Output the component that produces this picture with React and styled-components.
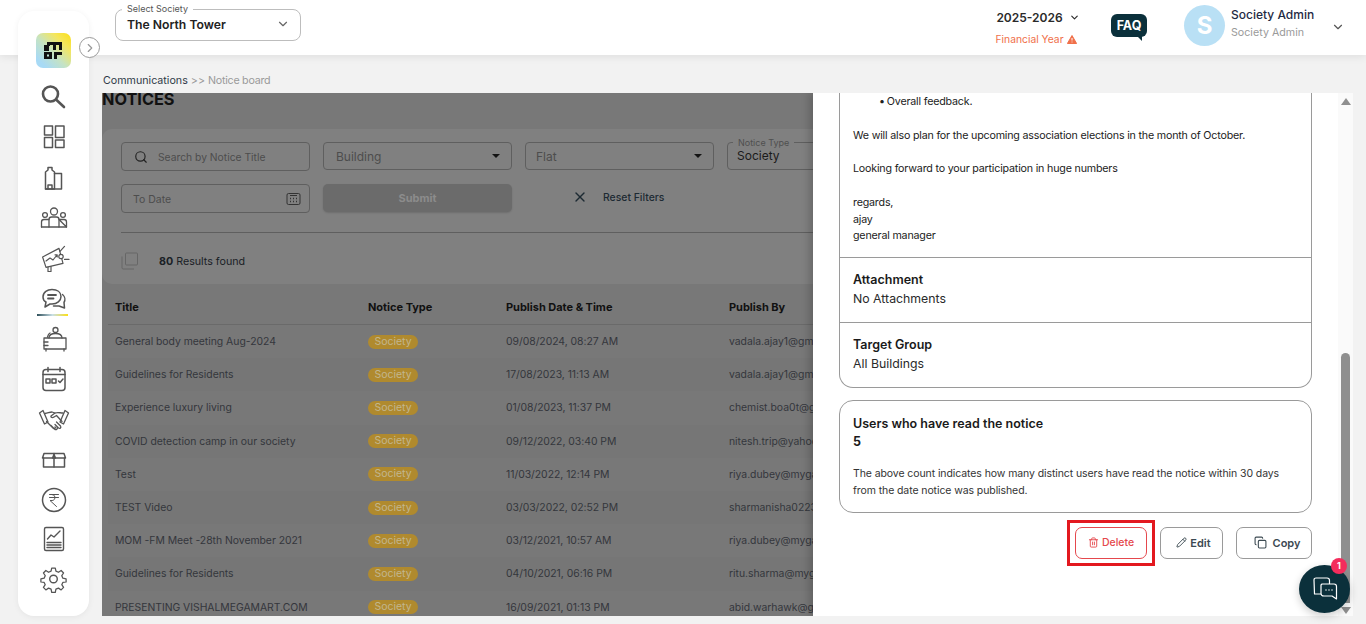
import React from "react";
import styled, { createGlobalStyle } from "styled-components";
import { Search, X, Pencil, Trash2, Copy, ChevronDown, ChevronRight } from "lucide-react";

const Global = createGlobalStyle`
  html, body { margin: 0; padding: 0; height: 100%; overflow: hidden; }
  body { font-family: Inter, "Liberation Sans", sans-serif; background: #f2f2f2; }
  #root { height: 100%; }
  * { box-sizing: border-box; }
`;

const Page = styled.div`
  position: relative;
  height: 624px;
  display: flex;
  flex-direction: column;
  overflow: hidden;
  background: #f2f2f2;
`;

/* ---------- header ---------- */
const Header = styled.header`
  height: 55px;
  flex: none;
  background: #fff;
  box-shadow: 0 2px 8px rgba(0, 0, 0, 0.08);
  display: flex;
  align-items: flex-start;
  padding-left: 115px;
  position: relative;
`;
const SocietySelect = styled.div`
  position: relative;
  margin-top: 9px;
  width: 186px;
  height: 32px;
  border: 1px solid #bdbdbd;
  border-radius: 8px;
  display: flex;
  align-items: center;
  justify-content: space-between;
  padding: 0 10px 2px 11px;
  color: #666;
`;
const FloatLabel = styled.span`
  position: absolute;
  top: -7px;
  left: 6px;
  padding: 0 5px;
  background: #fff;
  font-size: 9px;
  line-height: 11px;
  color: #555;
`;
const SocietyName = styled.span`
  font-size: 12.2px;
  font-weight: 600;
  color: #222;
`;
const HeaderRight = styled.div`
  margin-left: auto;
  display: flex;
  align-items: flex-start;
  height: 100%;
`;
const YearBlock = styled.div`
  width: 86px;
  margin-right: 30px;
  padding-top: 10px;
  display: flex;
  flex-direction: column;
  align-items: center;
`;
const YearRow = styled.div`
  display: flex;
  align-items: center;
  gap: 6px;
  font-size: 12px;
  font-weight: 600;
  line-height: 15px;
  color: #2a2a2a;
`;
const FinYear = styled.div`
  margin: 8px 4px 0 0;
  display: flex;
  align-items: center;
  gap: 3px;
  font-size: 10.3px;
  line-height: 13px;
  color: #f0704a;
  white-space: nowrap;
`;
const Faq = styled.div`
  position: relative;
  margin-top: 14px;
  margin-right: 37px;
  width: 36px;
  height: 23px;
  background: #0b303b;
  border-radius: 6px;
  color: #fff;
  font-size: 12.5px;
  font-weight: 700;
  line-height: 23px;
  text-align: center;
  &::after {
    content: "";
    position: absolute;
    right: 5px;
    bottom: -4px;
    border-top: 5px solid #0b303b;
    border-left: 5px solid transparent;
  }
`;
const Avatar = styled.div`
  margin-top: 5px;
  width: 41px;
  height: 41px;
  border-radius: 50%;
  background: #b9e0f5;
  color: #fff;
  font-size: 24px;
  font-weight: 700;
  display: flex;
  align-items: center;
  justify-content: center;
`;
const UserBlock = styled.div`
  margin-left: 6px;
  width: 100px;
  padding-top: 7px;
`;
const UserName = styled.div`
  font-size: 12px;
  line-height: 15px;
  font-weight: 500;
  color: #1f2a44;
`;
const UserRole = styled.div`
  margin-top: 4px;
  font-size: 10.7px;
  line-height: 13px;
  color: #9a9a9a;
`;
const UserChevron = styled.div`
  margin-top: 18px;
  width: 35px;
  color: #555;
`;

/* ---------- sidebar ---------- */
const Sidebar = styled.nav`
  position: absolute;
  left: 18px;
  top: 11px;
  width: 71px;
  height: 605px;
  background: #fff;
  border-radius: 16px;
  box-shadow: 0 1px 6px rgba(0, 0, 0, 0.06);
  display: flex;
  flex-direction: column;
  align-items: center;
  padding-top: 22px;
  z-index: 5;
`;
const Logo = styled.div`
  width: 35px;
  height: 35px;
  border-radius: 7px;
  margin-bottom: 8px;
  background: linear-gradient(225deg, #fbdf16 0%, #f5e65c 25%, #c5e3c4 55%, #a8daf5 85%);
  display: flex;
  align-items: center;
  justify-content: center;
`;
const NavItem = styled.div`
  position: relative;
  flex: none;
  height: 40.4px;
  width: 100%;
  display: flex;
  align-items: center;
  justify-content: center;
  &::after {
    content: "";
    display: ${(p) => (p.$active ? "block" : "none")};
    position: absolute;
    left: 19px;
    bottom: 2.5px;
    width: 31px;
    height: 2px;
    background: linear-gradient(90deg, #2f4f5a, #c9dfe6 50%, #fbdf16);
  }
`;
const Toggle = styled.div`
  position: absolute;
  left: 79px;
  top: 37px;
  width: 21px;
  height: 21px;
  border-radius: 50%;
  border: 1px solid #9a9a9a;
  background: #fff;
  color: #999;
  display: flex;
  align-items: center;
  justify-content: center;
  z-index: 6;
`;
const Ico = ({ children, w = 1.4 }) => (
  <svg width="32" height="32" viewBox="0 0 32 32" fill="none" stroke="#555" strokeWidth={w} strokeLinecap="round" strokeLinejoin="round">
    {children}
  </svg>
);
const icons = [
  <Ico w={2.6} key="s"><circle cx="12.5" cy="14" r="7.5" /><path d="M18 19.5 L26 27" /></Ico>,
  <Ico w={1.5} key="d"><rect x="6.5" y="5" width="8" height="9" /><rect x="6.5" y="16.5" width="8" height="10" /><rect x="17.5" y="5" width="8.5" height="11.5" /><rect x="17.5" y="19" width="8.5" height="7.5" /></Ico>,
  <Ico w={1.5} key="b"><path d="M7.5 28V11L10 9V6.5H14V9L16.5 11V28Z" /><path d="M16.5 12.5H23.5V28H7.5" /><path d="M10 28V24H14V28" /></Ico>,
  <Ico w={1.3} key="p"><circle cx="16" cy="10.5" r="3.5" /><circle cx="7" cy="14" r="2.4" /><circle cx="25" cy="14" r="2.4" /><path d="M11 26V18.5Q11 16 13.5 16H18.5Q21 16 21 18.5V26" /><path d="M3.5 26V21Q3.5 18.5 6 18.5H11M21 18.5H26Q28.5 18.5 28.5 21V26Z" /><path d="M3.5 26H28.5" /></Ico>,
  <Ico w={1.2} key="m"><path d="M4.6 15L21 6.4L25 21.4L8 25.4Z" /><path d="M10 25V29.5H13V24.5" /><path d="M8 19L12 16L15 18L19 13M17 12.8H19.2V15" /><circle cx="23" cy="14.5" r="2.2" fill="#fff" /><path d="M22 9.4L26.5 4.4M26.5 17.4H31" /></Ico>,
  <Ico w={1.5} key="c"><g transform="translate(0 1.5)"><path d="M5 13.5C5 8.5 9.5 6 14 6C19 6 23 8.5 23 13C23 17.5 19 20.5 14 20.5H12L7 23.5L8 18.5C6 17.5 5 15.5 5 13.5Z" /><path d="M10 11.5H18M10 15H15.5" strokeWidth="1.8" /><path d="M24.5 11C27 13 27.5 16.5 26 19L26.5 24.5L21 22.5H15.5" /></g></Ico>,
  <Ico w={1.3} key="t"><circle cx="17.5" cy="7" r="2.5" /><path d="M11 15C11 12 14 10.5 17.5 10.5C21 10.5 24 12 24 15" /><path d="M6 15H28V26H6Z" /><path d="M8 26V28M26 26V28M6 19H10M6 22.5H10" /><path d="M9.5 14C10 12 11 10.5 12 10" /></Ico>,
  <Ico w={1.5} key="k"><rect x="5" y="6.5" width="22" height="21" rx="3" /><path d="M5 11.5H27M10 4.5V8.5M22 4.5V8.5" /><rect x="8" y="16" width="4" height="4" /><rect x="14" y="16" width="4" height="4" /><path d="M20.5 18L22 19.5L25 16" /></Ico>,
  <Ico w={1.3} key="h"><path d="M1.5 10L5 7.5L10 19L6.5 21Z" /><path d="M30.5 10L27 7.5L22 19L25.5 21Z" /><path d="M7 10.5C10 10 12 9 14 9L17 10L13 13C12.5 14.5 14.5 15 16 14L18.5 12.5L24 18.5" /><path d="M25 10C22 10 20 9 17 10" /><path d="M8.5 18.5L15 25C16.5 26.5 18 25 17 24M13 22.5L16.5 26C18 27.5 20 26 19 24.5M17 21.5L20.5 25C22 26 23.5 24.5 22.5 23L18.5 19" /></Ico>,
  <Ico w={1.5} key="x"><path d="M6 9.5H26L27.5 14H4.5Z" /><path d="M5.5 14V23H26.5V14" /><path d="M16 9.5V23" /><path d="M14.5 14L16 10.5L17.5 14Z" fill="#555" /></Ico>,
  <Ico w={1.5} key="r"><circle cx="16" cy="16" r="11.5" /><path d="M11.5 10.5H20.5M11.5 13.5H20.5M14 10.5C18 10.5 18 16.5 14 16.5H12L18.5 22.5" strokeWidth="1" /></Ico>,
  <Ico w={1.4} key="g"><rect x="6.5" y="3.5" width="19" height="23" rx="1.5" /><path d="M9.5 15L13 11L16 13L22 7" /><path d="M9 18.5H23M9 21H23M9 23.5H23" /></Ico>,
  <Ico w={1.4} key="w"><circle cx="15.5" cy="14" r="3.8" /><path d="M14 2.5H18L18.7 6L21.5 7.2L24.5 5.2L27.2 8L25.2 11L26.4 13.8L30 14.5V18L26.4 18.5L25.2 21L27.2 24L24.5 26.8L21.5 24.8L18.7 26L18 29.5H14L13.3 26L10.5 24.8L7.5 26.8L4.8 24L6.8 21L5.6 18.5L2 18V14.5L5.6 13.8L6.8 11L4.8 8L7.5 5.2L10.5 7.2L13.3 6Z" transform="translate(1.1 0.8) scale(0.9)" /></Ico>,
];

/* ---------- main ---------- */
const Main = styled.main`
  flex: 1;
  min-height: 0;
  display: flex;
  flex-direction: column;
  padding: 0 13px 8px 102px;
`;
const Crumbs = styled.div`
  height: 38px;
  flex: none;
  padding: 19px 0 0 1px;
  font-size: 10.7px;
  line-height: 13px;
  color: #9a9a9a;
  & b { font-weight: 400; color: #2f3a48; }
  & i { font-style: normal; letter-spacing: -0.25px; }
`;
const Stage = styled.section`
  position: relative;
  flex: 1;
  min-height: 0;
  overflow: hidden;
  background: #787878;
`;
const Title = styled.h1`
  margin: 0;
  font-size: 16.3px;
  line-height: 12px;
  font-weight: 700;
  color: #111;
`;
const FilterCard = styled.div`
  margin-top: 24px;
  height: 155px;
  background: #808080;
  border-radius: 10px;
  padding: 13px 19px 0;
`;
const FilterGrid = styled.div`
  display: grid;
  grid-template-columns: repeat(4, 189px);
  grid-auto-rows: 29px;
  gap: 13px;
`;
const Field = styled.div`
  position: relative;
  border: 1px solid #5f5f5f;
  border-radius: 4px;
  display: flex;
  align-items: center;
  padding: 0 ${(p) => p.$pr || 11}px 0 ${(p) => p.$pl || 12}px;
  color: #4d4d4d;
  font-size: ${(p) => p.$fs || 12}px;
  height: ${(p) => p.$h || 29}px;
`;
const Placeholder = styled.span`
  flex: 1;
  margin-left: ${(p) => p.$ml || 0}px;
  margin-top: ${(p) => p.$mt || 0}px;
`;
const TypeLabel = styled.span`
  position: absolute;
  top: -6px;
  left: 5px;
  padding: 0 5px;
  background: #808080;
  font-size: 9px;
  line-height: 11px;
  color: #4f4f4f;
`;
const TypeValue = styled.span`
  color: #1b1b1b;
  font-size: 12px;
  margin: -1px 0 0 -1px;
`;
const Caret = styled.span`
  width: 0;
  height: 0;
  border-left: 4px solid transparent;
  border-right: 4px solid transparent;
  border-top: 4px solid #141414;
`;
const SubmitBtn = styled.div`
  height: 28px;
  border-radius: 5px;
  background: #6b6b6b;
  box-shadow: 0 1px 2px rgba(0, 0, 0, 0.15);
  color: #8c8c8c;
  font-size: 11px;
  font-weight: 700;
  display: flex;
  align-items: center;
  justify-content: center;
`;
const ResetBtn = styled.div`
  height: 28px;
  display: flex;
  align-items: center;
  padding: 0 0 2px 47px;
  gap: 15px;
  color: #1d2a33;
  font-size: 10.4px;
  font-weight: 500;
`;
const Divider = styled.div`
  margin-top: 19px;
  height: 1px;
  background: #5f5f5f;
`;
const Results = styled.div`
  margin-top: 18px;
  height: 20px;
  display: flex;
  align-items: center;
  gap: 20px;
  font-size: 10.7px;
  color: #1a2026;
  & b { font-weight: 700; }
`;
const Table = styled.div`
  margin: 8px 0 0 6px;
`;
const Row = styled.div`
  display: grid;
  grid-template-columns: 253px 138px 223px 1fr;
  align-items: center;
  padding-left: 7px;
  height: 33.2px;
  font-size: 10.4px;
  letter-spacing: -0.02px;
  white-space: nowrap;
  color: #34363c;
  background: ${(p) => (p.$alt ? "#767676" : "transparent")};
`;
const HeadRow = styled(Row)`
  height: 33px;
  padding-bottom: 3px;
  font-size: 11px;
  border-bottom: 1px solid #6a6a6a;
  font-weight: 700;
  color: #111;
`;
const Pill = styled.span`
  justify-self: start;
  width: 50px;
  height: 14px;
  border-radius: 7px;
  background: #b08a2e;
  color: #c2b68e;
  font-size: 10.5px;
  line-height: 14px;
  text-align: center;
`;

/* ---------- drawer ---------- */
const Drawer = styled.aside`
  position: absolute;
  top: 0;
  right: 0;
  bottom: 0;
  width: 540px;
  display: flex;
  background: #fff;
  box-shadow: -4px 0 8px rgba(0, 0, 0, 0.18);
`;
const DrawerBody = styled.div`
  flex: 1;
  min-width: 0;
  padding: 0 26px;
  color: #222;
`;
const Scrollbar = styled.div`
  width: 15px;
  padding: 5px 3px 0;
  background: #fafafa;
  display: flex;
  flex-direction: column;
  align-items: center;
`;
const ArrowUp = styled.div`
  flex: none;
  border-left: 5px solid transparent;
  border-right: 5px solid transparent;
  border-bottom: 7px solid #8f8f8f;
`;
const ArrowDown = styled.div`
  flex: none;
  margin-top: 4px;
  border-left: 5px solid transparent;
  border-right: 5px solid transparent;
  border-top: 7px solid #8f8f8f;
`;
const Thumb = styled.div`
  flex: none;
  margin-top: 248px;
  width: 9px;
  height: 250px;
  border-radius: 5px 5px 0 0;
  background: #8f8f8f;
`;
const InfoCard = styled.div`
  border: 1px solid #9a9a9a;
  border-top: none;
  border-radius: 0 0 14px 14px;
`;
const BodySection = styled.div`
  padding: 1px 13px 13px;
  border-bottom: 1px solid #9a9a9a;
  font-size: 10.7px;
  letter-spacing: -0.19px;
  line-height: 16.8px;
  height: 164.5px;
`;
const Bullet = styled.ul`
  margin: 0 0 16.8px;
  padding: 0 0 0 26px;
  list-style: none;
  & li::before {
    content: "•";
    margin-right: 2px;
  }
`;
const Para = styled.p`
  margin: 0 0 16.8px;
`;
const InfoSection = styled.div`
  height: ${(p) => (p.$last ? 64 : 65)}px;
  padding: 12px 13px 0;
  border-bottom: ${(p) => (p.$last ? "none" : "1px solid #9a9a9a")};
`;
const InfoTitle = styled.div`
  font-size: 12.5px;
  line-height: 19px;
  font-weight: 600;
  color: #1a1a1a;
`;
const InfoValue = styled.div`
  font-size: 12.3px;
  line-height: 19px;
  color: #2a2a2a;
`;
const ReadCard = styled.div`
  margin-top: 12px;
  height: 113px;
  border: 1px solid #9a9a9a;
  border-radius: 14px;
  padding: 13px 13px 0;
`;
const Count = styled.div`
  font-size: 12.5px;
  line-height: 18px;
  font-weight: 700;
  color: #1a1a1a;
`;
const ReadText = styled.p`
  margin: 14px 0 0;
  font-size: 10.5px;
  letter-spacing: -0.09px;
  line-height: 17px;
  color: #333;
`;
const Actions = styled.div`
  margin-top: 7px;
  display: flex;
  justify-content: flex-end;
  align-items: center;
`;
const Highlight = styled.div`
  border: 3px solid #e3181f;
  padding: 4px 5px;
  margin-right: 5px;
`;
const ActionBtn = styled.div`
  width: ${(p) => p.$w}px;
  height: 32px;
  margin-left: ${(p) => p.$ml || 0}px;
  padding-left: ${(p) => p.$pl || 0}px;
  border: 1px solid ${(p) => (p.$danger ? "#e5484d" : "#9a9a9a")};
  border-radius: 7px;
  background: #fff;
  color: ${(p) => (p.$danger ? "#e5484d" : "#3c4a52")};
  font-size: ${(p) => (p.$danger ? 10.5 : 11)}px;
  font-weight: ${(p) => (p.$danger ? 500 : 600)};
  display: flex;
  align-items: center;
  justify-content: center;
  gap: ${(p) => p.$gap || 3}px;
`;
const ChatFab = styled.div`
  position: absolute;
  left: 1299px;
  top: 565px;
  width: 51px;
  height: 48px;
  border-radius: 50%;
  background: #0b303b;
  display: flex;
  align-items: center;
  justify-content: center;
  box-shadow: 0 3px 8px rgba(0, 0, 0, 0.2);
  z-index: 7;
`;
const Badge = styled.span`
  position: absolute;
  left: 32px;
  top: -7px;
  width: 16px;
  height: 16px;
  border-radius: 50%;
  background: #f42c5c;
  color: #fff;
  font-size: 9px;
  font-weight: 700;
  line-height: 16px;
  text-align: center;
`;

const rows = [
  ["General body meeting Aug-2024", "09/08/2024, 08:27 AM", "vadala.ajay1@gmail.com"],
  ["Guidelines for Residents", "17/08/2023, 11:13 AM", "vadala.ajay1@gmail.com"],
  ["Experience luxury living", "01/08/2023, 11:37 PM", "chemist.boa0t@gmail.com"],
  ["COVID detection camp in our society", "09/12/2022, 03:40 PM", "nitesh.trip@yahoo.com"],
  ["Test", "11/03/2022, 12:14 PM", "riya.dubey@mygate.in"],
  ["TEST Video", "03/03/2022, 02:52 PM", "sharmanisha0223@gmail.com"],
  ["MOM -FM Meet -28th November 2021", "03/12/2021, 10:57 AM", "riya.dubey@mygate.in"],
  ["Guidelines for Residents", "04/10/2021, 06:16 PM", "ritu.sharma@mygate.in"],
  ["PRESENTING VISHALMEGAMART.COM", "16/09/2021, 01:13 PM", "abid.warhawk@gmail.com"],
];

export default function App() {
  return (
    <Page>
      <Global />
      <Header>
        <SocietySelect>
          <FloatLabel>Select Society</FloatLabel>
          <SocietyName>The North Tower</SocietyName>
          <ChevronDown size={14} />
        </SocietySelect>
        <HeaderRight>
          <YearBlock>
            <YearRow>2025-2026 <ChevronDown size={11} strokeWidth={2.5} /></YearRow>
            <FinYear>
              Financial Year
              <svg width="10" height="9" viewBox="0 0 10 9">
                <path d="M5 0.5L9.6 8.5H0.4Z" fill="#f0704a" stroke="#f0704a" strokeLinejoin="round" />
                <path d="M5 3V5.5M5 6.6V7.4" stroke="#fff" strokeWidth="1" />
              </svg>
            </FinYear>
          </YearBlock>
          <Faq>FAQ</Faq>
          <Avatar>S</Avatar>
          <UserBlock>
            <UserName>Society Admin</UserName>
            <UserRole>Society Admin</UserRole>
          </UserBlock>
          <UserChevron><ChevronDown size={14} strokeWidth={2} /></UserChevron>
        </HeaderRight>
      </Header>

      <Sidebar>
        <Logo>
          <svg width="19" height="18" viewBox="0 0 19 18" fill="#111">
            <rect x="0" y="3" width="5" height="6" />
            <path d="M3 0H18V8H15V3H12V8H9V3H6V4H3Z" />
            <path d="M0 10H8V17H0ZM3 12.5V14.5H5V12.5Z" fillRule="evenodd" />
            <path d="M10 10H18V13H13V17H10Z" />
          </svg>
        </Logo>
        {icons.map((ic, i) => (
          <NavItem key={i} $active={i === 5}>{ic}</NavItem>
        ))}
      </Sidebar>
      <Toggle><ChevronRight size={14} /></Toggle>

      <Main>
        <Crumbs><b>Communications</b> &gt;&gt; <i>Notice board</i></Crumbs>
        <Stage>
          <Title>NOTICES</Title>
          <FilterCard>
            <FilterGrid>
              <Field $fs={10.3}>
                <Search size={14} color="#222" />
                <Placeholder $ml={10}>Search by Notice Title</Placeholder>
              </Field>
              <Field $h={28}><Placeholder>Building</Placeholder><Caret /></Field>
              <Field $h={28} $pl={10}><Placeholder>Flat</Placeholder><Caret /></Field>
              <Field $h={28} $pl={10}>
                <TypeLabel>Notice Type</TypeLabel>
                <TypeValue>Society</TypeValue>
              </Field>
              <Field $fs={10.5} $pr={8} $pl={11}>
                <Placeholder $mt={2}>To Date</Placeholder>
                <svg width="15" height="14" viewBox="0 0 15 14" fill="none" stroke="#333" strokeWidth="1">
                  <rect x="1" y="1.5" width="13" height="11" rx="1.5" />
                  <path d="M4 3.5H11" />
                  <path d="M4 6.5H5M7 6.5H8M10 6.5H11M4 9.5H5M7 9.5H8M10 9.5H11" strokeWidth="1.5" />
                </svg>
              </Field>
              <SubmitBtn>Submit</SubmitBtn>
              <ResetBtn><X size={16} color="#1d2a33" />Reset Filters</ResetBtn>
            </FilterGrid>
            <Divider />
            <Results>
              <svg width="18" height="18" viewBox="0 0 18 18" fill="none" stroke="#666" strokeWidth="1">
                <rect x="4.5" y="1" width="12" height="12" rx="1" />
                <path d="M1 4.5V16C1 16.5 1.5 17 2 17H13" />
              </svg>
              <span><b>80</b> Results found</span>
            </Results>
          </FilterCard>
          <Table>
            <HeadRow>
              <span>Title</span><span>Notice Type</span><span>Publish Date &amp; Time</span><span>Publish By</span>
            </HeadRow>
            {rows.map((r, i) => (
              <Row key={i} $alt={i % 2 === 1}>
                <span>{r[0]}</span>
                <Pill>Society</Pill>
                <span>{r[1]}</span>
                <span>{r[2]}</span>
              </Row>
            ))}
          </Table>

          <Drawer>
            <DrawerBody>
              <InfoCard>
                <BodySection>
                  <Bullet><li>Overall feedback.</li></Bullet>
                  <Para>We will also plan for the upcoming association elections in the month of October.</Para>
                  <Para>Looking forward to your participation in huge numbers</Para>
                  <div>regards,</div>
                  <div>ajay</div>
                  <div>general manager</div>
                </BodySection>
                <InfoSection>
                  <InfoTitle>Attachment</InfoTitle>
                  <InfoValue>No Attachments</InfoValue>
                </InfoSection>
                <InfoSection $last>
                  <InfoTitle>Target Group</InfoTitle>
                  <InfoValue>All Buildings</InfoValue>
                </InfoSection>
              </InfoCard>
              <ReadCard>
                <InfoTitle>Users who have read the notice</InfoTitle>
                <Count>5</Count>
                <ReadText>The above count indicates how many distinct users have read the notice within 30 days from the date notice was published.</ReadText>
              </ReadCard>
              <Actions>
                <Highlight>
                  <ActionBtn $w={72} $danger><Trash2 size={11} />Delete</ActionBtn>
                </Highlight>
                <ActionBtn $w={63} $pl={4}><Pencil size={11} />Edit</ActionBtn>
                <ActionBtn $w={76} $ml={13} $gap={6} $pl={6}><Copy size={13} />Copy</ActionBtn>
              </Actions>
            </DrawerBody>
            <Scrollbar>
              <ArrowUp />
              <Thumb />
              <ArrowDown />
            </Scrollbar>
          </Drawer>
        </Stage>
      </Main>

      <ChatFab>
        <Badge>1</Badge>
        <svg width="26" height="24" viewBox="0 0 26 24" fill="none" stroke="#fff" strokeWidth="1.2" strokeLinejoin="round">
          <path d="M9 17H2.5L2 3C2 1.8 3 1 4 1H15C16.5 1 17.5 2 17.5 3.5V7" />
          <path d="M10 7H22C23.5 7 24.5 8 24.5 9.5V22L20 19H12C10.5 19 9 18 9 16.5V8Z" fill="#0b303b" />
          <path d="M13.5 13H14.5M16.5 13H17.5M19.5 13H20.5" strokeWidth="1.6" />
        </svg>
      </ChatFab>
    </Page>
  );
}
